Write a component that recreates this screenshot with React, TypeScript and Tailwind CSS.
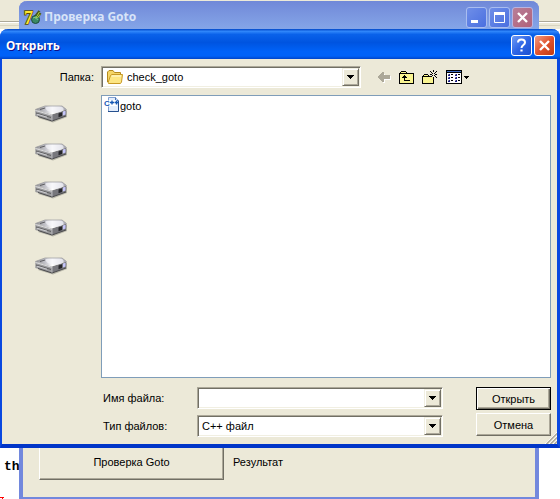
import type { ReactNode } from 'react';

const palette: Record<string, string> = {
  k: '#000000',
  y: '#ffff7a',
  p: '#f3e9a8',
  w: '#ffffff',
  b: '#3c6bc4',
  n: '#1a1a8c',
  g: '#8a8a8a',
  a: '#aca899',
};

const backArrow = [
  '....aa.......',
  '...aaa.......',
  '..aaaaw......',
  '.aaaaaaaaaaa.',
  'aaaaaaaaaaaaw',
  'aaaaaaaaaaaaw',
  '.aaaaaaaaaaaw',
  '..aaaawwwwwww',
  '...aaaw......',
  '....aaw......',
  '.....ww......',
];

const folderUp = [
  '..kkkkk........',
  '.kypypyk.......',
  'kkkkkkkkkkkkkkk',
  'kypypypypypypyk',
  'kpypykypypypypk',
  'kypykkkpypypypk',
  'kpykkkkkpypypyk',
  'kypypkpypypypyk',
  'kpypykypypypypk',
  'kypypkkkkkkypyk',
  'kpypypypypypypk',
  'kypypypypypypyk',
  'kkkkkkkkkkkkkkk',
];

const newFolder = [
  '...........k....',
  '........k..k..k.',
  '.........k...k..',
  '..........k.k...',
  '..kkkk..kk...kk.',
  '.kypypk...k.k...',
  'kkkkkkkkkk...k..',
  'kypypypypypk..k.',
  'kpypypypypyk....',
  'kypypypypypk....',
  'kpypypypypyk....',
  'kypypypypypk....',
  'kpypypypypyk....',
  'kkkkkkkkkkkk....',
];

const viewMenu = [
  'kkkkkkkkkkkkkkkk.......',
  'kbbbbbbbbbbbbbbk.......',
  'kkkkkkkkkkkkkkkk.......',
  'kwwwwwwwwwwwwwwk.......',
  'kwgnwkkwwgnwkkwk.......',
  'kwnnwwwwwnnwwwwk.......',
  'kwwwwwwwwwwwwwwk..kkkkk',
  'kwgnwkkwwgnwkkwk...kkk.',
  'kwnnwwwwwnnwwwwk....k..',
  'kwwwwwwwwwwwwwwk.......',
  'kwgnwkkwwgnwkkwk.......',
  'kwnnwwwwwnnwwwwk.......',
  'kwwwwwwwwwwwwwwk.......',
  'kkkkkkkkkkkkkkkk.......',
];

const drives = ['drive-1', 'drive-2', 'drive-3', 'drive-4', 'drive-5'];

function PixelIcon({ rows }: { rows: string[] }) {
  return (
    <svg width={rows[0].length} height={rows.length} shapeRendering="crispEdges" aria-hidden="true">
      {rows.map((row, y) =>
        row.split('').map((c, x) =>
          palette[c] ? <rect key={`${x}-${y}`} x={x} y={y} width="1" height="1" fill={palette[c]} /> : null
        )
      )}
    </svg>
  );
}

function DriveIcon() {
  return (
    <svg width="32" height="18" viewBox="0 0 32 18" aria-hidden="true">
      <defs>
        <linearGradient id="lid" x1="0" x2="1">
          <stop offset="0" stopColor="#8c8c90" />
          <stop offset="0.35" stopColor="#c9c9d0" />
          <stop offset="0.55" stopColor="#ffffff" />
          <stop offset="0.8" stopColor="#d2d2dc" />
          <stop offset="1" stopColor="#9c9ca6" />
        </linearGradient>
      </defs>
      <path d="M3 13 L18 17.5 L32 12 L32 6 L17 9Z" fill="#77776f" opacity="0.45" />
      <path d="M0.3 4.5 L17 9.5 L17 16 L0.3 11Z" fill="#9a9a9c" />
      <path d="M17 9.5 L31.5 4.5 L31 11 L17 16Z" fill="#77777c" />
      <path d="M0.3 4.5 L10 1 L27 1 L31.5 4.5 L17 9.5Z" fill="url(#lid)" />
      <path d="M11 2.5 C12 0.5 24 0 27 2 C31 5 27 7.5 20 7.5 C14 7.5 10 5 11 2.5Z" fill="#f4f4f8" opacity="0.7" />
      <path d="M0.3 4.5 L10 1 L27 1 L31.5 4.5" fill="none" stroke="#97979a" strokeWidth="0.7" />
      <path d="M5 4.5 L10 3" stroke="#5c5c60" />
      <path d="M0.5 5.5 L17 10.3" stroke="#e4e4e8" strokeWidth="0.9" />
      <path d="M1 8 L16 12.5" stroke="#4f4f52" strokeWidth="0.8" />
      <path d="M2 9.2 L12 12.2" stroke="#dcdce0" strokeWidth="0.8" />
      <path d="M3 11.5 L17 16 L31 11" fill="none" stroke="#4b4b4e" />
      <path d="M17 10 V15.5" stroke="#b7b7bb" />
      <path d="M23.5 8.5 L27 7.3 L27 11 L23.5 12.3Z" fill="#26262a" />
      <path d="M28 6.5 L30.5 5.7 L30.5 9.6 L28 10.5Z" fill="#c6c6fb" />
    </svg>
  );
}

function FolderIcon() {
  return (
    <svg width="16" height="14" viewBox="0 0 16 14" className="shrink-0" aria-hidden="true">
      <path d="M0.5 12 V2 L2 0.5 H6 L7.5 2.5 H13.5 V5" fill="#f5d566" stroke="#b58a1e" />
      <path d="M1 13 L3.5 5.5 L5 4.5 H15.5 L14.5 12 L13.5 13.5 H1.5Z" fill="#fde683" stroke="#c89a26" />
      <path d="M4.5 6 H14" stroke="#fffbd8" />
    </svg>
  );
}

function CppIcon() {
  return (
    <svg width="16" height="16" viewBox="0 0 16 16" className="shrink-0 overflow-visible" aria-hidden="true">
      <path d="M4.5 0.5 H11.5 L14.5 3.5 V14.5 H4.5Z" fill="#e3edfc" stroke="#7f9fd0" />
      <path d="M14.5 4 V14.5 H4" fill="none" stroke="#26508f" />
      <path d="M11.5 0.5 V3.5 H14.5" fill="#c3d6f3" stroke="#4672b4" />
      <rect x="5" y="3" width="8" height="6" fill="#ffffff" />
      <text x="0" y="9" fontSize="8" fontWeight="bold" fontFamily="Liberation Sans, sans-serif" fill="#1457b5" stroke="#fff" strokeWidth="1.5" paintOrder="stroke">C</text>
      <path d="M6 5.5 H10 M8 3.5 V7.5 M10.5 5.5 H14.5 M12.5 3.5 V7.5" stroke="#1457b5" strokeWidth="1.4" />
    </svg>
  );
}

function AppIcon() {
  return (
    <svg width="17" height="17" viewBox="0 0 17 17" className="shrink-0 overflow-visible" aria-hidden="true">
      <path d="M10 9 L15.5 2 M13 9 L16.5 4" stroke="#4b5a1a" strokeWidth="2.4" />
      <circle cx="11.5" cy="10.5" r="4" fill="#3a8a63" stroke="#1d4a3a" />
      <path d="M9 9 L12 8 L13.5 11" fill="none" stroke="#77c890" />
      <path d="M11.5 9.5 L15.5 3 M13.5 9 L16 5.5" stroke="#b9d63e" />
      <text x="0" y="15" fontSize="18" fontWeight="bold" fontFamily="Liberation Serif, serif" fill="#ffe62e" stroke="#5a4c00" strokeWidth="1.6" paintOrder="stroke">7</text>
    </svg>
  );
}

function ArrowGlyph() {
  return (
    <svg width="7" height="4" shapeRendering="crispEdges" aria-hidden="true">
      <path d="M0 0 H7 V1 H6 V2 H5 V3 H4 V4 H3 V3 H2 V2 H1 V1 H0Z" fill="#000" />
    </svg>
  );
}

const arrowBox =
  'flex w-[17px] shrink-0 items-center justify-center border border-t-[#f1efe2] border-l-[#f1efe2] border-r-[#716f64] border-b-[#716f64] bg-[#ece9d8] shadow-[inset_1px_1px_0_#fff,inset_-1px_-1px_0_#aca899]';

function Sunken({ children }: { children: ReactNode }) {
  return (
    <div className="flex h-[22px] min-w-0 flex-1 border border-t-[#aca899] border-l-[#aca899] border-r-white border-b-white bg-white p-px shadow-[inset_1px_1px_0_#716f64,inset_-1px_-1px_0_#f1efe2]">
      {children}
    </div>
  );
}

function CaptionButton({ label, tone, children }: { label: string; tone: string; children: ReactNode }) {
  return (
    <button type="button" aria-label={label} className={`flex size-[21px] items-center justify-center rounded-[3px] border ${tone}`}>
      <svg width="19" height="19" viewBox="0 0 19 19" fill="none" stroke="#fff" aria-hidden="true">
        {children}
      </svg>
    </button>
  );
}

export default function App() {
  const blue = 'border-white bg-linear-to-br from-[#6f9bf5] via-[#2f66e6] to-[#1a4fd0]';
  const red = 'border-white bg-linear-to-br from-[#f09a80] via-[#e0532d] to-[#c03a10]';
  const paleBlue = 'border-[#a9bdf0] bg-linear-to-br from-[#6f8ee8] to-[#4a6fe0]';
  const paleRed = 'border-[#b8b4e0] bg-linear-to-br from-[#b87f98] to-[#b0607a]';

  return (
    <main className="relative flex h-screen min-h-[300px] flex-col overflow-hidden bg-white pb-[51px] font-['Liberation_Sans',sans-serif] text-[11px] leading-[14px] text-black">
      <div className="h-[29px] shrink-0 bg-[#ece9d8] pt-[21px]">
        <div className="h-[5px] border-t border-b border-t-[#aca899] border-b-[#d8d4c0] shadow-[inset_0_1px_0_#fff]" />
      </div>

      <span className="absolute bottom-[25px] left-1 font-['Liberation_Mono',monospace] text-[13px] font-bold">th</span>
      <svg width="5" height="2" className="absolute bottom-0 left-0" shapeRendering="crispEdges" aria-hidden="true">
        <path d="M0 0 H4 V1 H3 V2 H2 V1 H0Z" fill="#f00" />
      </svg>

      <section className="absolute top-px right-[21px] bottom-0 left-[19px] flex flex-col rounded-t-lg border-x-4 border-b-2 border-[#7288dd] bg-[#ece9d8]">
        <header className="-mx-1 flex h-7 shrink-0 items-center gap-[3px] rounded-t-lg bg-linear-to-b from-[#7088d8] via-[#7b97e0] to-[#84a5e8] pt-1 pr-[6px] pl-[5px]">
          <AppIcon />
          <h1 className="flex-1 font-['Noto_Sans',sans-serif] text-[12px] leading-4 font-bold text-[#d8e4f8]">Проверка Goto</h1>
          <div className="flex gap-[2px]">
            <CaptionButton label="Свернуть" tone={paleBlue}>
              <path d="M4 13.5 H11" strokeWidth="3" />
            </CaptionButton>
            <CaptionButton label="Развернуть" tone={paleBlue}>
              <path d="M4.5 4 V14.5 H14.5 V4" />
              <path d="M4 5.5 H15" strokeWidth="3" />
            </CaptionButton>
            <CaptionButton label="Закрыть" tone={paleRed}>
              <path d="M5 5 L14 14 M14 5 L5 14" strokeWidth="2.4" />
            </CaptionButton>
          </div>
        </header>
        <div className="flex flex-1 items-end gap-[9px] pb-[17px] pl-4">
          <button type="button" className="h-[38px] w-[185px] border border-t-white border-l-white border-r-[#716f64] border-b-[#716f64] pt-[2px] shadow-[inset_-1px_-1px_0_#aca899]">
            Проверка Goto
          </button>
          <p className="pb-[11px]">Результат</p>
        </div>
      </section>

      <section role="dialog" aria-label="Открыть" className="relative flex min-h-0 flex-1 flex-col rounded-t-lg border-r-[3px] border-b-4 border-l-2 border-r-[#0a48e0] border-b-[#0035c8] border-l-[#0a48e0] bg-[#ece9d8]">
        <header className="-mr-[3px] -ml-[2px] flex h-[30px] shrink-0 items-center rounded-t-lg bg-[linear-gradient(#0046c8_0%,#2f86fa_8%,#0a62ea_18%,#0054e0_45%,#0062f8_75%,#0062f8_90%,#0044c8_100%)] pt-[3px] pr-[5px] pl-[6px]">
          <h2 className="flex-1 font-['Noto_Sans',sans-serif] text-[12px] leading-4 font-bold text-white [text-shadow:1px_1px_0_#0f1089]">Открыть</h2>
          <div className="flex gap-[2px]">
            <CaptionButton label="Справка" tone={blue}>
              <path d="M6 6.5 C6 2.5 13 2.5 13 6.5 C13 9 9.5 9 9.5 12" strokeWidth="2" />
              <path d="M9.5 13.5 V15.5" strokeWidth="2.2" />
            </CaptionButton>
            <CaptionButton label="Закрыть окно" tone={red}>
              <path d="M5 5 L14 14 M14 5 L5 14" strokeWidth="2.4" />
            </CaptionButton>
          </div>
        </header>

        <div className="grid min-h-0 flex-1 grid-cols-[99px_1fr] grid-rows-[auto_1fr_auto] pr-[6px] pb-[7px]">
          <label htmlFor="folder" className="pt-[11px] pr-[7px] text-right">Папка:</label>
          <div className="flex items-start pt-[7px] pb-[7px]">
            <Sunken>
              <div className="flex min-w-0 flex-1 items-center pl-1">
                <FolderIcon />
                <select id="folder" className="min-w-0 flex-1 appearance-none pl-1 outline-none">
                  <option>check_goto</option>
                </select>
              </div>
              <span className={arrowBox}><ArrowGlyph /></span>
            </Sunken>
            <div className="flex h-[22px] w-[190px] items-center gap-2 pl-[17px]">
              <button type="button" aria-label="Назад"><PixelIcon rows={backArrow} /></button>
              <button type="button" aria-label="Вверх"><PixelIcon rows={folderUp} /></button>
              <button type="button" aria-label="Новая папка"><PixelIcon rows={newFolder} /></button>
              <button type="button" aria-label="Вид"><PixelIcon rows={viewMenu} /></button>
            </div>
          </div>

          <nav className="flex flex-col items-center gap-5 pt-[10px] pr-[2px]">
            {drives.map(d => (
              <button key={d} type="button" aria-label={d}><DriveIcon /></button>
            ))}
          </nav>
          <ul className="border border-[#7f9db9] bg-white pt-px pl-[2px]">
            <li className="flex items-center">
              <CppIcon />
              <span className="pt-px">goto</span>
            </li>
          </ul>

          <div className="col-start-2 flex gap-[33px] pt-[9px] pl-[2px]">
            <div className="flex flex-1 flex-col gap-[6px]">
              <div className="flex items-center">
                <label htmlFor="filename" className="w-[94px]">Имя файла:</label>
                <Sunken>
                  <input id="filename" type="text" className="min-w-0 flex-1 px-[3px] outline-none" />
                  <button type="button" aria-label="Список имён" className={arrowBox}><ArrowGlyph /></button>
                </Sunken>
              </div>
              <div className="flex items-center">
                <label htmlFor="filetype" className="w-[94px]">Тип файлов:</label>
                <Sunken>
                  <select id="filetype" className="min-w-0 flex-1 appearance-none px-[3px] outline-none">
                    <option>C++ файл</option>
                  </select>
                  <span className={arrowBox}><ArrowGlyph /></span>
                </Sunken>
              </div>
            </div>
            <div className="flex w-[75px] flex-col gap-[3px]">
              <button type="button" className="h-[23px] border border-black shadow-[inset_1px_1px_0_#fff,inset_-1px_-1px_0_#716f64,inset_-2px_-2px_0_#aca899]">Открыть</button>
              <button type="button" className="h-[23px] border border-t-white border-l-white border-r-[#716f64] border-b-[#716f64] shadow-[inset_-1px_-1px_0_#aca899]">Отмена</button>
            </div>
          </div>
        </div>

        <svg width="12" height="12" className="absolute right-0 bottom-0" aria-hidden="true">
          <path d="M0 12 L12 0 M4 12 L12 4 M8 12 L12 8" stroke="#fff" />
          <path d="M1.5 12 L12 1.5 M5.5 12 L12 5.5 M9.5 12 L12 9.5" stroke="#aca899" strokeWidth="1.5" />
        </svg>
      </section>
    </main>
  );
}
